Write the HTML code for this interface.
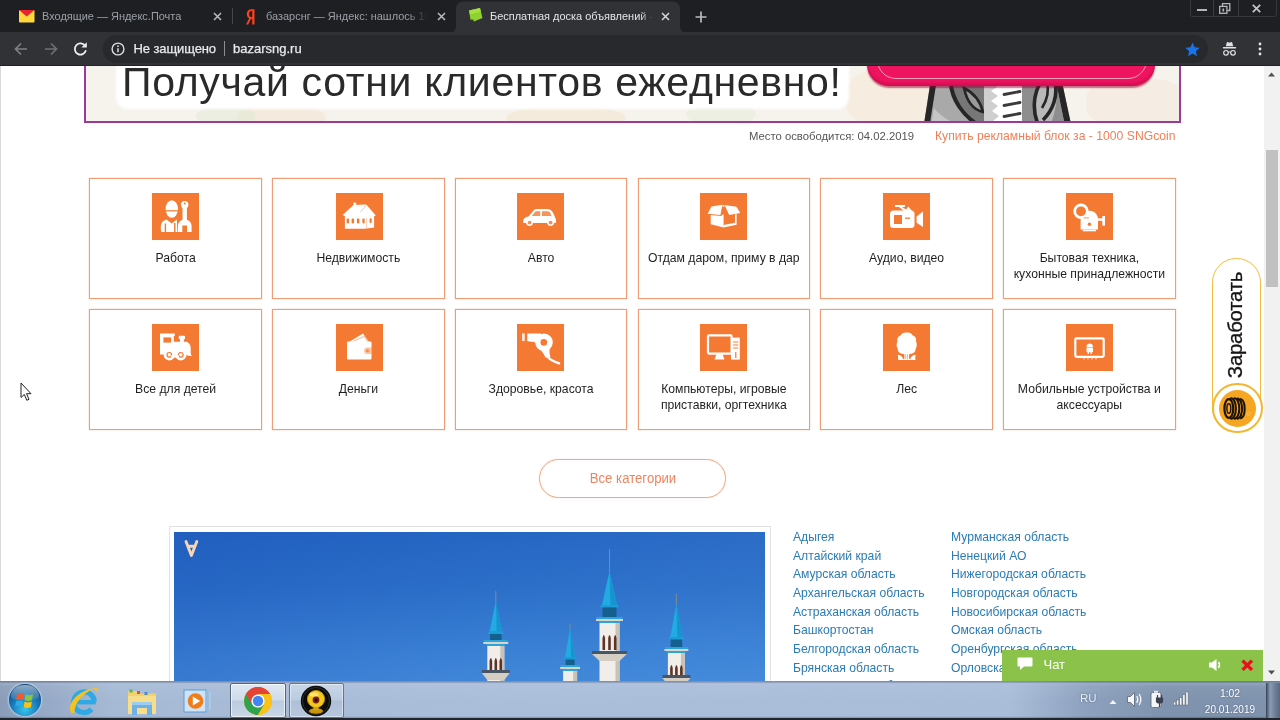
<!DOCTYPE html>
<html><head><meta charset="utf-8"><title>bazarsng</title>
<style>
*{box-sizing:border-box;margin:0;padding:0}
html,body{width:1280px;height:720px;overflow:hidden;background:#fff;font-family:"Liberation Sans",sans-serif;}
#root{position:relative;width:1280px;height:720px;overflow:hidden;background:#fff;opacity:.999}
.abs{position:absolute}
svg{position:absolute;overflow:visible}
/* chrome */
#tabstrip{left:0;top:0;width:1280px;height:32px;background:#1e1f23}
#toolbar{left:0;top:32px;width:1280px;height:34px;background:#303236;border-bottom:1px solid #222327}
.tabtxt{position:absolute;top:8.5px;height:14px;line-height:14px;font-size:11.3px;color:#9aa0a6;white-space:nowrap;overflow:hidden;transform-origin:0 50%;transform:scaleX(.97)}
#omni{left:103px;top:35px;width:1105px;height:28px;border-radius:14px;background:#27292d}
.url{position:absolute;top:41px;font-size:13px;line-height:15px;color:#e8eaed;white-space:nowrap;-webkit-text-stroke:.25px #e8eaed}
/* page */
#banner{left:84px;top:56px;width:1097px;height:67px;border:2px solid #9a3a9c;background:#f6f3ed;overflow:hidden}
.card{position:absolute;width:172.6px;height:121px;border:1px solid #f09c76;background:#fff;box-shadow:0 0 1px rgba(240,150,110,.9)}
.ico{position:absolute;left:61.4px;top:14.1px;width:47px;height:47px;background:#f47933}
.ico svg{left:0;top:0;width:47px;height:47px}
.lbl{position:absolute;left:0;width:170.6px;top:70.9px;text-align:center;font-size:12.2px;line-height:16.3px;color:#1f1f1f}
.reg{position:absolute;font-size:12.17px;line-height:15px;color:#2b7bb5;white-space:nowrap}
.tray{position:absolute;color:#fff;font-size:11.3px;white-space:nowrap;text-shadow:0 0 2px rgba(40,60,90,.6)}
</style></head><body><div id="root">
<!-- PAGE -->
<div class="abs" style="left:0;top:66px;width:1263px;height:616px;background:#fff"></div>
<div class="abs" style="left:0;top:66px;width:1px;height:616px;background:#d9d9d9"></div>
<div id="banner" class="abs">
  <!-- faint pattern blobs -->
  <div class="abs" style="left:150px;top:45px;width:90px;height:30px;background:#f1e4cf;border-radius:50%;opacity:.5"></div>
  <div class="abs" style="left:110px;top:48px;width:60px;height:20px;background:#dfe9d4;border-radius:50%;opacity:.5"></div>
  <div class="abs" style="left:420px;top:48px;width:120px;height:24px;background:#f3e3cc;border-radius:50%;opacity:.5"></div>
  <div class="abs" style="left:600px;top:44px;width:70px;height:24px;background:#e6ecd9;border-radius:50%;opacity:.6"></div>
  <div class="abs" style="left:760px;top:10px;width:100px;height:60px;background:#f5e6d3;border-radius:40%;opacity:.5"></div>
  <div class="abs" style="left:1000px;top:20px;width:100px;height:50px;background:#f5e7d6;border-radius:40%;opacity:.45"></div>
  <!-- white text cloud -->
  <div class="abs" style="left:32px;top:0px;width:729px;height:48.5px;background:#fff;border-radius:0 0 10px 10px;box-shadow:0 0 3px 2px #fff"></div>
  <div class="abs" id="btxt" style="left:36px;top:.6px;font-size:41px;line-height:46px;color:#2a2a2a;white-space:nowrap;letter-spacing:.67px">Получай сотни клиентов ежедневно!</div>
  <!-- cat -->
  <svg style="left:836px;top:24px;width:160px;height:44px" viewBox="0 0 160 44">
    <path d="M8.5 0 H140 L149.4 44 H1.7 Z" fill="#8e8e8e"/>
    <path d="M14 0 H30 C32 18 42 34 58 44 H7.5 Z" fill="#a9a9a9"/>
    <path d="M12 26 L9 44 H40 C28 40 18 34 12 26Z" fill="#c6c6c6"/>
    <path d="M30 0 C32 18 42 34 58 44 H70 V0 Z" fill="#777"/>
    <path d="M8.5 0 H14.5 L7.5 44 H1.7 Z" fill="#262626"/>
    <path d="M134 0 H140 L149.4 44 H143 Z" fill="#262626"/>
    <path d="M28.5 0 C30 18 41 34 58 44" stroke="#262626" stroke-width="4" fill="none"/>
    <path d="M42 6 C50 10 58 18 61 30 C52 28 45 20 42 6Z" fill="#9a9a9a" stroke="#262626" stroke-width="2.6"/>
    <path d="M62 0 H100 V44 H62 Z" fill="#cfcfcf"/>
    <path d="M70 0 L75 5 L69 9 L76 14 L69 19 L76 24 L70 29 L77 34 L71 39 L76 44 H100 V0 Z" fill="#fff"/>
    <path d="M82 12.5 L98 9.5 M82 23.5 L98 20.5 M82 34.5 L98 31.5" stroke="#3a3a3a" stroke-width="2.8" stroke-linecap="round"/>
    <path d="M100 0 H134 L143 44 H100Z" fill="#8e8e8e"/>
    <path d="M119 0 C111 12 110 30 117 44 H128 C134 30 136 14 134 0Z" fill="#b9b9b9"/>
    <path d="M119 0 C111 12 110 30 117 44" stroke="#262626" stroke-width="3.6" fill="none"/>
    <path d="M133 0 C136 14 131 28 121 38" stroke="#262626" stroke-width="3.6" fill="none"/>
    <path d="M125 0 C127 8 125 18 120 26" stroke="#262626" stroke-width="2.6" fill="none"/>
  </svg>
  <!-- pink button -->
  <div class="abs" style="left:781.300px;top:-40px;width:288.200px;height:68.200px;border-radius:22px;background:#ef1460;box-shadow:0 1.500px 1.500px rgba(150,0,50,.55), inset 0 -3px 3px rgba(190,10,70,.55)"></div>
  <div class="abs" style="left:790.500px;top:-40px;width:270px;height:60.500px;border-radius:19px;border:1.500px solid #ff9fc0"></div>
</div>
<div class="abs" style="left:749px;top:129px;font-size:11.3px;line-height:14px;color:#555;white-space:nowrap">Место освободится: 04.02.2019</div>
<div class="abs" style="left:935px;top:129px;font-size:12.2px;line-height:14px;color:#f07f58;white-space:nowrap">Купить рекламный блок за - 1000 SNGcoin</div>
<!-- category cards -->
<div class="card" style="left:89.30px;top:178px"><div class="ico" style="left:61.8px"><svg viewBox="0 0 47 47"><ellipse cx="19.8" cy="16" rx="6.2" ry="8.7" fill="#fff"/>
<path d="M13.2 17.8 H26.4" stroke="#f47933" stroke-width="1.2"/>
<path d="M9.2 38.9 C8 31.5 9.5 27.8 14.5 26.4 L19.8 30.6 L24.8 26.4 L25.4 38.9 Z" fill="#fff"/>
<path d="M13.4 30.4 V38.9 M22.8 30 V38.9" stroke="#f47933" stroke-width="1.4"/>
<path d="M30.5 10 H34.9 V28 H30.5 Z" fill="#fff"/>
<circle cx="32.7" cy="11.7" r="3.7" fill="#fff"/>
<circle cx="32.7" cy="10.6" r="1" fill="#f47933"/>
<path d="M26 38.9 V33 C26 28.8 29 26.4 32.7 26.4 C36.5 26.4 39.6 28.8 39.6 33 V38.9 H35 V32.6 H30.3 V38.9 Z" fill="#fff"/></svg></div><div class="lbl">Работа</div></div>
<div class="card" style="left:272.05px;top:178px"><div class="ico" style="left:62.5px"><svg viewBox="0 0 47 47"><path d="M6.6 22 L17.5 12 L30.3 11.6 L39.8 22.5 L38.1 23.3 L38.1 34.4 L29 35.8 L8.9 35.8 L8.9 22.9 Z" fill="#fff"/>
<rect x="17.4" y="9.6" width="2.8" height="4.4" fill="#fff"/>
<path d="M30.3 12.2 L24.2 19.2" stroke="#f47933" stroke-width=".9" fill="none" opacity=".5"/>
<rect x="10.6" y="25.6" width="2.5" height="4.8" rx=".8" fill="#f47933"/>
<rect x="15.6" y="25.6" width="2.5" height="4.8" rx=".8" fill="#f47933"/>
<rect x="20.9" y="25.6" width="2.5" height="4.8" rx=".8" fill="#f47933"/>
<rect x="26.4" y="25.6" width="2.3" height="4.8" rx=".8" fill="#f47933"/>
<rect x="33.6" y="25.2" width="2.1" height="4.8" rx=".8" fill="#f47933"/>
<path d="M30.6 25 V35.4" stroke="#f47933" stroke-width=".8" opacity=".45"/></svg></div><div class="lbl">Недвижимость</div></div>
<div class="card" style="left:454.80px;top:178px"><div class="ico" style="left:61.3px"><svg viewBox="0 0 47 47"><path d="M6.3 30 C5.8 25.6 7.8 24.2 11.8 23.2 L16.8 17.3 C17.8 16.2 18.8 15.9 20.8 15.9 H29.8 C32.8 15.9 34.8 17.2 36.3 20.2 L38.3 24.7 C39.3 27.2 39.2 28.6 38.7 30 Z" fill="#fff"/>
<path d="M14.8 23 L18.6 18.3 H23.2 V23 Z M25 18.3 H30.3 C32 18.3 32.8 19.1 33.6 20.7 L34.6 23 H25 Z" fill="#f47933" opacity=".8"/>
<circle cx="12.6" cy="29.6" r="3.4" fill="#fff"/><circle cx="12.6" cy="29.6" r="1.9" fill="#f47933" opacity=".85"/>
<circle cx="33.6" cy="29.6" r="3.4" fill="#fff"/><circle cx="33.6" cy="29.6" r="1.9" fill="#f47933" opacity=".85"/></svg></div><div class="lbl">Авто</div></div>
<div class="card" style="left:637.55px;top:178px"><div class="ico" style="left:61.8px"><svg viewBox="0 0 47 47"><path d="M7.6 20.8 L11.5 13.6 L22.4 11.8 L20.4 22 Z" fill="#fff"/>
<path d="M24.6 11.9 L36.4 13.8 L40.3 20 L29.2 22 Z" fill="#fff"/>
<path d="M22.4 11.8 L23.5 12.6 L24.6 11.9 L24.2 14 L22.8 14 Z" fill="#fff"/>
<path d="M10.7 22 L21 23 L23.6 21 L23.6 34.4 L10.7 31.2 Z" fill="#fff"/>
<path d="M35 21.6 L36.6 21 V31.8 L23.6 34.4 V31.9 L35 29.7 Z" fill="#fff"/></svg></div><div class="lbl">Отдам даром, приму в дар</div></div>
<div class="card" style="left:820.30px;top:178px"><div class="ico" style="left:61.8px"><svg viewBox="0 0 47 47"><rect x="7" y="17.5" width="24.5" height="17.5" rx="3.5" fill="#fff"/>
<rect x="11" y="22" width="8" height="9" fill="#f47933"/>
<path d="M22 25.2 H27" stroke="#f47933" stroke-width="1.3"/>
<path d="M12 12 H22 V14 H12 Z" fill="#fff"/>
<path d="M19 14 L25.5 18 L21.5 18.5 L16 14Z" fill="#fff"/>
<path d="M22.5 17.6 L25.2 13.4 L30.6 19.5 Z" fill="#fff"/>
<path d="M33.6 23.4 L40 18.6 V34 L33.6 29.8 Z" fill="#fff"/></svg></div><div class="lbl">Аудио, видео</div></div>
<div class="card" style="left:1003.05px;top:178px"><div class="ico" style="left:62.2px"><svg viewBox="0 0 47 47"><path d="M14.6 36.4 V28.5 C14.6 21.5 19 17.7 23.8 17.7 C28.8 17.7 32 21.8 32 26.5 V36.4 Z" fill="#fff"/>
<path d="M16.8 37.5 H30" stroke="#fff" stroke-width="1.6"/>
<circle cx="15" cy="18.3" r="6.3" fill="#f47933" stroke="#fff" stroke-width="2.8"/>
<path d="M16.5 24.9 H23" stroke="#fff" stroke-width="3.4" stroke-linecap="round"/>
<path d="M18 24.9 H22.6" stroke="#f47933" stroke-width="1" stroke-linecap="round" opacity=".8"/>
<path d="M31 26.6 H37.5" stroke="#fff" stroke-width="2.4"/>
<rect x="36.3" y="23" width="2.7" height="9.6" fill="#fff"/>
<circle cx="23.4" cy="31.3" r="1.7" fill="#f47933"/></svg></div><div class="lbl">Бытовая техника,<br>кухонные принадлежности</div></div>
<div class="card" style="left:89.30px;top:309.2px"><div class="ico" style="left:61.8px"><svg viewBox="0 0 47 47"><path d="M8 9.6 H22.8 V12 H21.8 V17.8 H33 C36.5 17.8 38.7 20.5 38.7 24 V30 L40 31.8 H36 L34 30.5 H8 Z" fill="#fff"/>
<rect x="11.4" y="13.4" width="7.8" height="5.2" fill="#f47933"/>
<rect x="28" y="14.5" width="3.8" height="4" fill="#fff"/>
<rect x="26.8" y="11.8" width="6.2" height="3.4" rx=".8" fill="#fff"/>
<circle cx="17.3" cy="30.8" r="4.3" fill="#f47933" stroke="#fff" stroke-width="2.8"/>
<circle cx="28.8" cy="30.8" r="4.3" fill="#f47933" stroke="#fff" stroke-width="2.8"/>
<path d="M19 32.4 H27" stroke="#fff" stroke-width="2.2"/>
<circle cx="17.3" cy="30.8" r="1.7" fill="#fff"/>
<circle cx="28.8" cy="30.8" r="1.7" fill="#fff"/></svg></div><div class="lbl">Все для детей</div></div>
<div class="card" style="left:272.05px;top:309.2px"><div class="ico" style="left:62.5px"><svg viewBox="0 0 47 47"><path d="M13 18 L27 9.5 L33 18 Z" fill="#fff"/>
<path d="M16 18 L28.5 12.2 L31.5 18" stroke="#f47933" stroke-width=".9" fill="none" opacity=".6"/>
<rect x="11" y="17.5" width="24.5" height="18" rx="1" fill="#fff"/>
<path d="M35.5 23.5 H31 C29 23.5 28 25 28 26.8 C28 28.6 29 30 31 30 H35.5 Z" fill="#f47933" opacity=".45"/>
<circle cx="31.5" cy="26.8" r="1.5" fill="#f47933" opacity=".8"/></svg></div><div class="lbl">Деньги</div></div>
<div class="card" style="left:454.80px;top:309.2px"><div class="ico" style="left:61.3px"><svg viewBox="0 0 47 47"><rect x="5" y="9.4" width="2.8" height="7.6" fill="#fff" opacity=".8"/>
<path d="M10.3 9.4 L24 9.6 V21 L17 18 L10.3 17.2 Z" fill="#fff"/>
<circle cx="27" cy="18.2" r="8.8" fill="#fff"/>
<circle cx="26.8" cy="18.4" r="3.3" fill="#f47933"/>
<path d="M21 23 C24 26 26.5 29 28.5 33.5 L33.5 33 C32.5 30 32 27 33 23.5 Z" fill="#fff"/>
<path d="M30.5 32.5 C32.5 36 37 37.5 42 39.3" stroke="#fff" stroke-width="2.5" fill="none" stroke-linecap="round"/></svg></div><div class="lbl">Здоровье, красота</div></div>
<div class="card" style="left:637.55px;top:309.2px"><div class="ico" style="left:61.8px"><svg viewBox="0 0 47 47"><rect x="8" y="11.4" width="23.6" height="18.2" rx="1" fill="none" stroke="#fff" stroke-width="2.2"/>
<path d="M16.5 30 H22.5 L24.5 35.5 H14.5 Z" fill="#fff"/>
<rect x="31" y="13.6" width="8.8" height="22" fill="#fff"/>
<path d="M33.2 18 H38.3 M33.2 21 H38.3 M33.2 24 H38.3" stroke="#f47933" stroke-width="1"/>
<path d="M35.8 28 V34" stroke="#f47933" stroke-width="1.2"/></svg></div><div class="lbl">Компьютеры, игровые<br>приставки, оргтехника</div></div>
<div class="card" style="left:820.30px;top:309.2px"><div class="ico" style="left:61.8px"><svg viewBox="0 0 47 47"><path d="M23.7 8.6 C26.5 8.2 28.6 9.4 29.6 11.2 C32.4 12 33.6 14.6 33 17.2 C34.2 19.6 34 22.8 32.6 24.8 C32.8 27.6 30.6 29.8 27.8 29.8 C26.4 30.6 21 30.6 19.6 29.8 C16.8 29.8 14.6 27.6 14.8 24.8 C13.4 22.8 13.2 19.6 14.4 17.2 C13.8 14.6 15 12 17.8 11.2 C18.8 9.4 20.9 8.2 23.7 8.6 Z" fill="#fff"/>
<path d="M21.9 29.5 V35.3 M25.5 29.5 V35.3 M23.7 29.5 V35.3" stroke="#fff" stroke-width="1.2"/>
<path d="M14.8 30.8 C17 30.8 19.6 32.3 20.1 35.4 H15.3 Z M32.6 30.8 C30.4 30.8 27.8 32.3 27.3 35.4 H32.1 Z" fill="#fff"/>
<path d="M15 35.4 H32.6" stroke="#fff" stroke-width="1"/></svg></div><div class="lbl">Лес</div></div>
<div class="card" style="left:1003.05px;top:309.2px"><div class="ico" style="left:62.2px"><svg viewBox="0 0 47 47"><rect x="9.3" y="14.3" width="28.4" height="18.6" rx="1.3" fill="none" stroke="#fff" stroke-width="2.2"/>
<path d="M20.5 23 C20.5 20.5 22 19.5 23.7 19.5 C25.4 19.5 27 20.5 27 23 Z" fill="#fff"/>
<rect x="20.5" y="23.6" width="6.5" height="4.6" rx=".8" fill="#fff"/>
<path d="M22.3 28 V30 M25.2 28 V30" stroke="#fff" stroke-width="1.3"/>
<path d="M17 34.8 H31" stroke="#fff" stroke-width="1" stroke-dasharray="2 2" opacity=".6"/></svg></div><div class="lbl">Мобильные устройства и<br>аксессуары</div></div>
<div class="abs" style="left:539px;top:459px;width:187px;height:39px;border:1.4px solid #f4a583;border-radius:20px;text-align:center;line-height:36.5px;font-size:14px;color:#ef8460;box-shadow:0 0 1px rgba(245,160,120,.6)"><span style="display:inline-block;transform:scaleX(.94)">Все категории</span></div>
<!-- photo -->
<div class="abs" style="left:169px;top:526px;width:602px;height:170px;border:1px solid #e2e2e2;background:#fff"></div>
<div class="abs" style="left:174px;top:532px;width:591px;height:160px;background:linear-gradient(180deg,#2566c3 0%,#2b6fc9 35%,#3a81d5 75%,#4389da 100%)"></div>
<div class="abs" style="left:174px;top:532px;width:591px;height:160px;background:linear-gradient(90deg,rgba(15,55,165,.16) 0%,rgba(15,55,165,0) 55%,rgba(120,180,240,.08) 100%)"></div>
<svg style="left:0;top:0;width:1280px;height:720px" viewBox="0 0 1280 720">
<path d="M495.8 591 V603" stroke="#7f8a99" stroke-width="1"/>
<path d="M495.8 601 L502.05 631.5 L489.55 631.5 Z" fill="#21aae3"/>
<path d="M495.8 601 L502.05 631.5 L496.8 631.5 Z" fill="#1694cf"/>
<rect x="488.05" y="631.5" width="15.5" height="2.5" fill="#1c9bd6"/>
<rect x="490.05" y="634.0" width="11.5" height="6.0" fill="#155f8e"/>
<path d="M483.3 640 H508.3 L504.3 646 H487.3 Z" fill="#2aa5db"/>
<rect x="483.3" y="642" width="25" height="2" fill="#d9d2c6"/>
<rect x="487.3" y="646" width="17" height="54" fill="#f1eee9"/>
<rect x="500.3" y="646" width="4" height="54" fill="#c9c2b8"/>
<path d="M489.55 673 V661 Q490.85 655 492.15000000000003 661 V673 Z" fill="#5e3328"/>
<path d="M494.5 673 V661 Q495.8 655 497.1 661 V673 Z" fill="#5e3328"/>
<path d="M499.45 673 V661 Q500.75 655 502.05 661 V673 Z" fill="#5e3328"/>
<rect x="481.8" y="670" width="28" height="3" fill="#4a5563"/>
<path d="M481.8 673 H509.8 L504.3 680 H487.3 Z" fill="#d5cdc1"/>
<path d="M570.1 624 V630" stroke="#7f8a99" stroke-width="1"/>
<path d="M570.1 628 L575.1 657 L565.1 657 Z" fill="#21aae3"/>
<path d="M570.1 628 L575.1 657 L571.1 657 Z" fill="#1694cf"/>
<rect x="563.6" y="657" width="13" height="2.5" fill="#1c9bd6"/>
<rect x="565.6" y="659.5" width="9" height="5.5" fill="#155f8e"/>
<path d="M560.1 665 H580.1 L577.1 671 H563.1 Z" fill="#2aa5db"/>
<rect x="560.1" y="667" width="20" height="2" fill="#d9d2c6"/>
<rect x="563.1" y="671" width="14" height="29" fill="#f1eee9"/>
<rect x="573.1" y="671" width="4" height="29" fill="#c9c2b8"/>
<path d="M564.6 698 V686 Q565.9 680 567.1999999999999 686 V698 Z" fill="#5e3328"/>
<path d="M568.8000000000001 698 V686 Q570.1 680 571.4 686 V698 Z" fill="#5e3328"/>
<path d="M573.0000000000001 698 V686 Q574.3000000000001 680 575.6 686 V698 Z" fill="#5e3328"/>
<path d="M609.5 549 V573" stroke="#7f8a99" stroke-width="1"/>
<path d="M609.5 571 L617.0 605 L602.0 605 Z" fill="#21aae3"/>
<path d="M609.5 571 L617.0 605 L610.5 605 Z" fill="#1694cf"/>
<rect x="600.5" y="605" width="18" height="2.5" fill="#1c9bd6"/>
<rect x="602.5" y="607.5" width="14" height="9.5" fill="#155f8e"/>
<path d="M596.0 617 H623.0 L619.5 623 H599.5 Z" fill="#2aa5db"/>
<rect x="596.0" y="619" width="27" height="2" fill="#d9d2c6"/>
<rect x="599.5" y="623" width="20" height="77" fill="#f1eee9"/>
<rect x="615.5" y="623" width="4" height="77" fill="#c9c2b8"/>
<path d="M602.5 650 V638 Q603.8 632 605.0999999999999 638 V650 Z" fill="#5e3328"/>
<path d="M608.2 650 V638 Q609.5 632 610.8 638 V650 Z" fill="#5e3328"/>
<path d="M613.9000000000001 650 V638 Q615.2 632 616.5 638 V650 Z" fill="#5e3328"/>
<rect x="592.0" y="651" width="35" height="3" fill="#4a5563"/>
<path d="M592.0 654 H627.0 L619.5 661 H599.5 Z" fill="#d5cdc1"/>
<path d="M676.4 594 V606" stroke="#7f8a99" stroke-width="1"/>
<path d="M676.4 604 L682.65 637 L670.15 637 Z" fill="#21aae3"/>
<path d="M676.4 604 L682.65 637 L677.4 637 Z" fill="#1694cf"/>
<rect x="668.65" y="637" width="15.5" height="2.5" fill="#1c9bd6"/>
<rect x="670.65" y="639.5" width="11.5" height="7.5" fill="#155f8e"/>
<path d="M664.4 647 H688.4 L684.9 653 H667.9 Z" fill="#2aa5db"/>
<rect x="664.4" y="649" width="24" height="2" fill="#d9d2c6"/>
<rect x="667.9" y="653" width="17" height="47" fill="#f1eee9"/>
<rect x="680.9" y="653" width="4" height="47" fill="#c9c2b8"/>
<path d="M670.15 680 V668 Q671.4499999999999 662 672.7499999999999 668 V680 Z" fill="#5e3328"/>
<path d="M675.1 680 V668 Q676.4 662 677.6999999999999 668 V680 Z" fill="#5e3328"/>
<path d="M680.0500000000001 680 V668 Q681.35 662 682.65 668 V680 Z" fill="#5e3328"/>
<rect x="662.4" y="675" width="28" height="3" fill="#4a5563"/>
<path d="M662.4 678 H690.4 L684.9 685 H667.9 Z" fill="#d5cdc1"/>
<path d="M186 541.5 L191.4 555.5 L196.8 541.5 M188 546.3 H194.8" stroke="#f6d6b6" stroke-width="2.9" fill="none" stroke-linejoin="round" stroke-linecap="round"/>
</svg>
<!-- regions -->
<div class="reg" style="left:793px;top:529.9px">Адыгея</div><div class="reg" style="left:951px;top:529.9px">Мурманская область</div>
<div class="reg" style="left:793px;top:548.6px">Алтайский край</div><div class="reg" style="left:951px;top:548.6px">Ненецкий АО</div>
<div class="reg" style="left:793px;top:567.3px">Амурская область</div><div class="reg" style="left:951px;top:567.3px">Нижегородская область</div>
<div class="reg" style="left:793px;top:585.9px">Архангельская область</div><div class="reg" style="left:951px;top:585.9px">Новгородская область</div>
<div class="reg" style="left:793px;top:604.6px">Астраханская область</div><div class="reg" style="left:951px;top:604.6px">Новосибирская область</div>
<div class="reg" style="left:793px;top:623.3px">Башкортостан</div><div class="reg" style="left:951px;top:623.3px">Омская область</div>
<div class="reg" style="left:793px;top:642.0px">Белгородская область</div><div class="reg" style="left:951px;top:642.0px">Оренбургская область</div>
<div class="reg" style="left:793px;top:660.7px">Брянская область</div><div class="reg" style="left:951px;top:660.7px">Орловская область</div>
<div class="reg" style="left:793px;top:679.3px">Владимирская область</div><div class="reg" style="left:951px;top:679.3px">Пензенская область</div>
<!-- earn button -->
<div class="abs" style="left:1212.4px;top:257.6px;width:48.6px;height:174px;border-radius:24.3px;border:1.6px solid #f3bb3f;background:#fff"></div>
<div class="abs" style="left:1212.1px;top:383px;width:50.6px;height:50.4px;border-radius:26px;border:2.2px solid #f3b732;background:#fff"></div>
<div class="abs" style="left:1219.3px;top:390px;width:36.6px;height:36.6px;border-radius:20px;background:#f5a623"></div>
<svg style="left:1220px;top:391px;width:34px;height:34px" viewBox="0 0 40 40">
  <g fill="none" stroke="#1d1206" stroke-width="2.4" stroke-linecap="round">
    <path d="M24.5 9.5 A5.7 11.5 0 0 1 24.5 32"/>
    <path d="M21 8.8 A5.7 12 0 0 1 21 32.6"/>
    <path d="M17 8.6 A5.7 12 0 0 1 17 32.6"/>
    <path d="M13 8.6 A5.7 12 0 0 1 13 32.6"/>
  </g>
  <ellipse cx="10.4" cy="20.6" rx="5.2" ry="11" fill="#f5a623" stroke="#1d1206" stroke-width="2.6"/>
  <ellipse cx="10.4" cy="20.6" rx="2.3" ry="5.6" fill="none" stroke="#1d1206" stroke-width="1.7"/>
  <circle cx="33.5" cy="26.5" r="2" fill="none" stroke="#f9c96b" stroke-width=".8"/>
</svg>
<div class="abs" style="left:1149.6px;top:312.6px;width:170px;height:24px;line-height:24px;text-align:center;font-size:20.8px;color:#151515;transform:rotate(-90deg) scaleX(.975);letter-spacing:-.2px;white-space:nowrap;-webkit-text-stroke:.3px #151515">Заработать</div>

<!-- scrollbar -->
<div class="abs" style="left:1264px;top:66px;width:16px;height:615px;background:#f1f1f1"></div>
<div class="abs" style="left:1266px;top:149.6px;width:12px;height:137.8px;background:#c1c1c1"></div>
<svg style="left:1263px;top:66px;width:17px;height:17px" viewBox="0 0 17 17"><path d="M5 10.5 L8.5 6.5 L12 10.5Z" fill="#505050"/></svg>
<svg style="left:1263px;top:664px;width:17px;height:17px" viewBox="0 0 17 17"><path d="M5 6.5 L8.5 10.5 L12 6.5Z" fill="#505050"/></svg>

<!-- chat -->
<div class="abs" style="left:1002px;top:649.5px;width:261px;height:31px;background:#8bc34a"></div>
<svg style="left:1017px;top:657px;width:16px;height:14px" viewBox="0 0 16 14"><path d="M1.5 0.5 H14.5 Q15.5 .5 15.5 1.5 V8.5 Q15.5 9.5 14.5 9.5 H7 L3 13 V9.5 H1.5 Q.5 9.5 .5 8.5 V1.5 Q.5 .5 1.5 .5Z" fill="#fff"/></svg>
<div class="abs" style="left:1043.5px;top:656.8px;font-size:13px;line-height:15px;color:#fff">Чат</div>
<svg style="left:1208px;top:657.5px;width:16px;height:14px" viewBox="0 0 16 14"><path d="M1 4.5 H4 L8.5 1 V13 L4 9.5 H1Z" fill="#fff"/><path d="M10.5 4 Q12.5 7 10.5 10" stroke="#fff" stroke-width="1.5" fill="none"/></svg>
<svg style="left:1241px;top:658.5px;width:12.5px;height:12.5px" viewBox="0 0 12 12"><path d="M1.5 1.5 L10.5 10.5 M10.5 1.5 L1.5 10.5" stroke="#e8101b" stroke-width="3.2"/></svg>
<!-- taskbar -->
<div class="abs" style="left:0;top:680.6px;width:1280px;height:39.4px;background:linear-gradient(90deg,#8a9cb8 0,#94a7c4 3%,#a6bad6 9%,#aabeda 40%,#a9bdd9 79%,#8da1be 85%,#7f93ae 91%,#7f93ae 100%)"></div>
<div class="abs" style="left:0;top:680.6px;width:1280px;height:39.4px;background:linear-gradient(180deg,rgba(90,100,120,.6) 0,rgba(110,122,145,.45) 1.4px,rgba(190,205,230,.3) 2.6px,rgba(255,255,255,.06) 5px,rgba(255,255,255,0) 50%,rgba(30,40,60,.0) 90%,rgba(20,25,40,.55) 100%)"></div>
<div class="abs" style="left:0;top:718px;width:1280px;height:2px;background:#20242d"></div>
<!-- start orb -->
<div class="abs" style="left:9px;top:684px;width:32px;height:32px;border-radius:16px;background:radial-gradient(circle at 50% 80%,#36c5ef 0,#1878b9 45%,#0f4d86 75%,#133a63 100%);box-shadow:0 0 2px 1px rgba(200,225,250,.7)"></div>
<div class="abs" style="left:11px;top:685px;width:28px;height:15px;border-radius:14px 14px 8px 8px/12px 12px 4px 4px;background:linear-gradient(rgba(255,255,255,.55),rgba(255,255,255,.08))"></div>
<svg style="left:15px;top:690px;width:20px;height:20px" viewBox="0 0 20 20">
 <path d="M2 4 Q5.5 2.3 9 4 L8.2 9.6 Q5 8.2 1.2 9.8Z" fill="#f3592a"/>
 <path d="M10.5 4.3 Q14 6.2 18 4.2 L17 10 Q13.5 11.8 9.7 10Z" fill="#8cc63f"/>
 <path d="M1 11.2 Q4.5 9.6 8 11.2 L7.2 16.6 Q4 15 .2 16.8Z" fill="#2aa8e8"/>
 <path d="M9.5 11.6 Q13 13.4 16.8 11.5 L16 17 Q12.5 18.8 8.8 17Z" fill="#fdc20f"/>
</svg>
<!-- IE -->
<svg style="left:68px;top:685px;width:32px;height:32px" viewBox="0 0 32 32">
 <path d="M26.3 16.6 A10.3 10.3 0 1 0 23.6 24.2" fill="none" stroke="#2fa9e6" stroke-width="5.2"/>
 <path d="M7.5 17.2 H27.8" stroke="#2fa9e6" stroke-width="4.4"/>
 <path d="M3.4 28.5 C-1.5 20 8 6 27 3 C14.5 8.5 6.5 18 6.4 27.5Z" fill="#f6c21c"/>
 <path d="M27 3 C30 3 31 5 29.5 8 C29.3 5.6 27.5 4.3 24 5Z" fill="#f6c21c"/>
</svg>
<!-- explorer -->
<svg style="left:126px;top:687px;width:32px;height:30px" viewBox="0 0 32 30">
 <path d="M2 4 H12 L14 6.5 H30 V27 H2Z" fill="#f3d16e"/>
 <path d="M2 9 H30 V27 H2Z" fill="#f7de8a"/>
 <rect x="3.5" y="2.5" width="3" height="3" fill="#5fb54a"/><rect x="11" y="4" width="3" height="3" fill="#d9573a"/><rect x="18.5" y="5" width="3" height="3" fill="#3f8fd6"/>
 <path d="M6 15 H26 V28 H21 V21 H11 V28 H6Z" fill="#6fb1e6"/>
 <path d="M6 15 H26 V18 H6Z" fill="#9ccdf1"/>
</svg>
<!-- media player -->
<svg style="left:180px;top:686px;width:34px;height:30px" viewBox="0 0 34 30">
 <rect x="4" y="4" width="22" height="22" fill="#cfe3f6" stroke="#5b9bd5" stroke-width="1"/>
 <rect x="26" y="5" width="2.2" height="20" fill="#8fbde6"/><rect x="29" y="6" width="1.6" height="18" fill="#a9cdee"/>
 <circle cx="15.5" cy="15" r="7.8" fill="#f07d1b"/>
 <path d="M12.8 10.5 L20.2 15 L12.8 19.500Z" fill="#fff"/>
</svg>
<!-- chrome button -->
<div class="abs" style="left:230px;top:683px;width:56px;height:35px;border:1px solid #596679;border-radius:2px;background:linear-gradient(180deg,#dfe8f4 0,#cfdbeb 48%,#bccbe0 52%,#c8d6e8 100%);box-shadow:inset 0 0 0 1px rgba(255,255,255,.65)"></div>
<svg style="left:243px;top:685.500px;width:30px;height:30px" viewBox="0 0 30 30">
 <circle cx="15" cy="15" r="14" fill="#fbc116"/>
 <path d="M15 15 L2.9 8 A14 14 0 0 1 27.1 8 Z" fill="#e54335"/>
 <path d="M15 15 L2.9 8 A14 14 0 0 0 15 29 L21.5 18.7 Z" fill="#2fa24f"/>
 <path d="M15 8 H27.1 A14 14 0 0 1 15 29 L21.1 18.5 Z" fill="#fbc116"/>
 <path d="M15 8 H27.1 A14 14 0 0 0 2.9 8 L8.9 18.500Z" fill="#e54335"/>
 <circle cx="15" cy="15" r="6.6" fill="#fff"/>
 <circle cx="15" cy="15" r="5.2" fill="#4285f4"/>
</svg>
<!-- webcam button -->
<div class="abs" style="left:288.500px;top:683px;width:55px;height:35px;border:1px solid #65748a;border-radius:2px;background:linear-gradient(180deg,#c9d6e8 0,#bccbe0 48%,#aebfd8 52%,#b7c8de 100%);box-shadow:inset 0 0 0 1px rgba(255,255,255,.45)"></div>
<svg style="left:300px;top:684.500px;width:32px;height:32px" viewBox="0 0 32 32">
 <circle cx="16" cy="16" r="15.2" fill="#0b0b0b"/>
 <circle cx="16" cy="16" r="13.5" fill="none" stroke="#2f2f2f" stroke-width="1"/>
 <ellipse cx="16" cy="26" rx="7" ry="2.8" fill="#c9950c"/>
 <rect x="13.5" y="20" width="5" height="5" fill="#d9a514"/>
 <circle cx="16" cy="14" r="8.6" fill="#f2c81c"/>
 <circle cx="16" cy="14" r="8.6" fill="none" stroke="#c99a0d" stroke-width=".8"/>
 <ellipse cx="14" cy="9.5" rx="4.5" ry="2.2" fill="#fbe98a" opacity=".8"/>
 <circle cx="16" cy="15" r="3.4" fill="#7c1f14"/>
 <circle cx="16" cy="15" r="1.6" fill="#2c0906"/>
</svg>
<!-- tray -->
<div class="tray" style="left:1080px;top:691px;font-size:11.500px;line-height:14px;color:#e7edf6">RU</div>
<svg style="left:1109px;top:699px;width:8px;height:6px" viewBox="0 0 8 6"><path d="M0.5 5 L4 1 L7.5 5Z" fill="#f2f5fa"/></svg>
<svg style="left:1126px;top:691px;width:18px;height:17px" viewBox="0 0 18 17">
 <path d="M1.5 5.5 H4.5 L8.5 1.5 V15.5 L4.5 11.5 H1.500Z" fill="#f4f6f9" stroke="#5a6473" stroke-width=".8"/>
 <path d="M10.8 5 Q12.8 8.5 10.8 12 M13.2 3 Q16.4 8.5 13.2 14" stroke="#f4f6f9" stroke-width="1.3" fill="none"/>
</svg>
<svg style="left:1150px;top:690px;width:15px;height:19px" viewBox="0 0 15 19">
 <rect x="1" y="2.5" width="10" height="15" rx="1.5" fill="#f4f6f9" stroke="#5a6473" stroke-width=".8"/>
 <rect x="4" y="0.8" width="4" height="2" fill="#e6e9ee"/>
 <path d="M7.5 5 V8 M11.5 5 V8 M6.5 8 H12.5 V11 Q12.5 13 9.5 13 Q6.5 13 6.5 11Z M9.5 13 V17" stroke="#3a4250" stroke-width="1.2" fill="#3a4250"/>
</svg>
<svg style="left:1173px;top:691px;width:16px;height:15px" viewBox="0 0 16 15">
 <g fill="#f4f6f9" stroke="#5a6473" stroke-width=".5"><rect x="0.5" y="11" width="2.2" height="3"/><rect x="3.6" y="9" width="2.2" height="5"/><rect x="6.7" y="6.5" width="2.2" height="7.5"/><rect x="9.8" y="3.8" width="2.2" height="10.2"/><rect x="12.9" y="1" width="2.2" height="13"/></g>
</svg>
<div class="tray" style="left:1200px;top:686px;width:60px;text-align:center;line-height:14px;transform:scaleX(.92)">1:02</div>
<div class="tray" style="left:1200px;top:701.500px;width:60px;text-align:center;line-height:14px;transform:scaleX(.89)">20.01.2019</div>
<div class="abs" style="left:1266px;top:683px;width:14px;height:35px;background:linear-gradient(90deg,#4f5d72 0,#8a9bb3 25%,#6f8099 60%,#596880 100%);border-left:1px solid #3e4a5c"></div>
<!-- CHROME UI -->
<div id="tabstrip" class="abs"></div>
<svg style="left:440px;top:0;width:260px;height:33px" viewBox="0 0 260 33">
  <path d="M8 33 C14 33 16 30 16 25 V9 C16 4 19 1.5 24 1.5 H232 C237 1.5 240 4 240 9 V25 C240 30 242 33 248 33 Z" fill="#303236"/>
</svg>
<div id="toolbar" class="abs"></div>
<div id="omni" class="abs"></div>
<!-- tab 1 -->
<svg style="left:18.500px;top:10px;width:15.500px;height:12.500px" viewBox="0 0 31 25"><rect width="31" height="25" rx="1.5" fill="#ffd83a"/><path d="M0 0 H31 L15.5 13Z" fill="#e8252f"/></svg>
<div class="tabtxt" style="left:41.500px;width:146px">Входящие — Яндекс.Почта</div>
<svg style="left:213px;top:12px;width:9px;height:9px" viewBox="0 0 9 9"><path d="M1 1 L8 8 M8 1 L1 8" stroke="#b9bcc1" stroke-width="1.5"/></svg>
<div class="abs" style="left:232px;top:8px;width:1px;height:16px;background:#45474b"></div>
<!-- tab 2 -->
<svg style="left:246px;top:8.500px;width:10px;height:15.500px" viewBox="0 0 10 15.5"><path d="M6.2 15.5 V9.8 H5.1 L2.2 15.5 H0 L3.2 9.3 C1.7 8.6 .8 7.2 .8 5 C.8 1.8 2.8 .2 5.6 .2 H8.5 V15.500Z M6.2 8 V2 H5.5 C4 2 3.1 3 3.1 5 C3.1 7.1 4 8 5.4 8Z" fill="#fc3f1d"/></svg>
<div class="tabtxt" style="left:265.500px;width:170px;-webkit-mask-image:linear-gradient(90deg,#000 86%,transparent 98%);mask-image:linear-gradient(90deg,#000 86%,transparent 98%)">базарснг — Яндекс: нашлось 10 тыс</div>
<svg style="left:437px;top:12px;width:9px;height:9px" viewBox="0 0 9 9"><path d="M1 1 L8 8 M8 1 L1 8" stroke="#b9bcc1" stroke-width="1.5"/></svg>
<!-- active tab -->
<svg style="left:467px;top:7px;width:17px;height:17px" viewBox="0 0 17 17"><path d="M2 3.5 L13 1 L15.5 11 L7 14.5 L5.5 12.5 L3.5 12.800Z" fill="#8fd12e"/><path d="M2 3.5 L13 1 L13.8 4.5 L3 7.500Z" fill="#a6e043"/><path d="M5.5 12.5 L7 14.5 L7.2 12.200Z" fill="#5f9a18"/></svg>
<div class="tabtxt" style="left:490px;width:168px;color:#e4e6e9;-webkit-mask-image:linear-gradient(90deg,#000 92%,transparent 100%);mask-image:linear-gradient(90deg,#000 92%,transparent 100%)">Бесплатная доска объявлений - &nbsp;</div>
<svg style="left:661px;top:12px;width:9px;height:9px" viewBox="0 0 9 9"><path d="M1 1 L8 8 M8 1 L1 8" stroke="#d4d6da" stroke-width="1.5"/></svg>
<svg style="left:695px;top:10.500px;width:12px;height:12px" viewBox="0 0 12 12"><path d="M6 .5 V11.5 M.5 6 H11.5" stroke="#b9bbbf" stroke-width="1.7"/></svg>
<!-- window controls -->
<div class="abs" style="left:1190px;top:0;width:87px;height:17px;border:1px solid #36373b;border-top:none;border-radius:0 0 3px 3px;background:#1e1f23"></div>
<div class="abs" style="left:1213px;top:0;width:1px;height:16px;background:#3c3d41"></div>
<div class="abs" style="left:1237.500px;top:0;width:1px;height:16px;background:#3c3d41"></div>
<div class="abs" style="left:1196.500px;top:9px;width:10px;height:2.200px;background:#b4b5b8"></div>
<svg style="left:1218.500px;top:2.500px;width:11.500px;height:11px" viewBox="0 0 11.5 11"><path d="M3.5 3 V.7 H10.8 V7.5 H8.2" stroke="#b4b5b8" stroke-width="1.3" fill="none"/><rect x=".7" y="3.4" width="7.2" height="6.9" stroke="#b4b5b8" stroke-width="1.3" fill="none"/><rect x="3.5" y="5.5" width="1.6" height="3" fill="#b4b5b8"/></svg>
<svg style="left:1252px;top:4px;width:9px;height:9px" viewBox="0 0 9 9"><path d="M.8 .8 L8.2 8.2 M8.2 .8 L.8 8.2" stroke="#c4c5c8" stroke-width="1.7"/></svg>
<!-- toolbar icons -->
<svg style="left:13.500px;top:42px;width:14px;height:14px" viewBox="0 0 14 14"><path d="M13 7 H2 M7 1.5 L1.5 7 L7 12.5" stroke="#7d8085" stroke-width="1.7" fill="none"/></svg>
<svg style="left:43.500px;top:42px;width:14px;height:14px" viewBox="0 0 14 14"><path d="M1 7 H12 M7 1.5 L12.5 7 L7 12.5" stroke="#6e7175" stroke-width="1.7" fill="none"/></svg>
<svg style="left:73px;top:41px;width:15px;height:15px" viewBox="0 0 15 15"><path d="M12.3 5.2 A5.6 5.6 0 1 0 12.9 9.3" stroke="#eceef0" stroke-width="1.8" fill="none"/><path d="M13.8 1.2 V6.6 H8.400Z" fill="#eceef0"/></svg>
<svg style="left:111px;top:42px;width:14px;height:14px" viewBox="0 0 14 14"><circle cx="7" cy="7" r="5.9" stroke="#dcdee1" stroke-width="1.4" fill="none"/><path d="M7 6.2 V10.3" stroke="#dcdee1" stroke-width="1.5"/><circle cx="7" cy="4.2" r=".9" fill="#dcdee1"/></svg>
<div class="url" style="left:133.500px;letter-spacing:-.1px">Не защищено</div>
<div class="abs" style="left:224px;top:41px;width:1px;height:15px;background:#8a8d91"></div>
<div class="url" style="left:233px">bazarsng.ru</div>
<svg style="left:1184.500px;top:41.500px;width:15px;height:14.500px" viewBox="0 0 24 23"><path d="M12 .8 L15.3 8.4 L23.5 9.1 L17.3 14.5 L19.2 22.5 L12 18.2 L4.8 22.5 L6.7 14.5 L.5 9.1 L8.7 8.400Z" fill="#1a73e8"/></svg>
<svg style="left:1221px;top:41px;width:17px;height:16px" viewBox="0 0 17 16"><path d="M4.8 5.2 L5.8 1.5 Q6 .9 6.6 1.1 L8.5 1.8 L10.4 1.1 Q11 .9 11.2 1.5 L12.2 5.200Z" fill="#dfe1e4"/><rect x="1.8" y="6" width="13.4" height="1.5" rx=".7" fill="#dfe1e4"/><circle cx="5" cy="11.8" r="2.3" stroke="#dfe1e4" stroke-width="1.2" fill="none"/><circle cx="12" cy="11.8" r="2.3" stroke="#dfe1e4" stroke-width="1.2" fill="none"/><path d="M7.2 11.3 Q8.5 10.5 9.8 11.3" stroke="#dfe1e4" stroke-width="1" fill="none"/></svg>
<svg style="left:1257.500px;top:42px;width:4px;height:14px" viewBox="0 0 4 14"><circle cx="2" cy="2" r="1.4" fill="#e3e5e8"/><circle cx="2" cy="7" r="1.4" fill="#e3e5e8"/><circle cx="2" cy="12" r="1.4" fill="#e3e5e8"/></svg>
<!-- mouse cursor -->
<svg style="left:20px;top:382px;width:13px;height:20px" viewBox="0 0 13 20"><path d="M1 1 V15.5 L4.3 12.5 L6.8 18.3 L9 17.3 L6.5 11.7 H11Z" fill="#fff" stroke="#222" stroke-width="1"/></svg>
</div></body></html>
